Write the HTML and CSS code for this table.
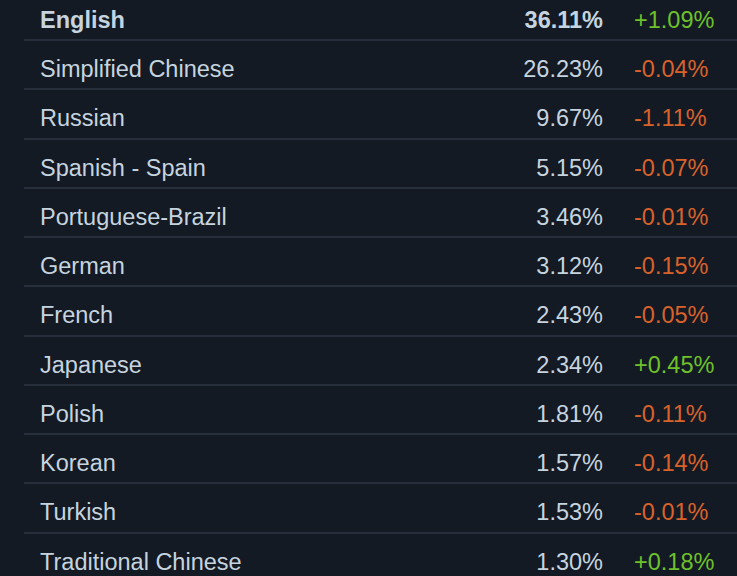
FILE: index.html
```html
<!DOCTYPE html>
<html lang="en">
<head>
  <meta charset="UTF-8">
  <meta name="viewport" content="width=device-width, initial-scale=1.0">
  <title>Languages</title>
  <link rel="stylesheet" href="styles.css">
</head>
<body>

<div class="langs">
  <div class="row top">
    <span class="name">English</span>
    <span class="pct">36.11%</span>
    <span class="chg up">+1.09%</span>
  </div>
  <div class="row">
    <span class="name">Simplified Chinese</span>
    <span class="pct">26.23%</span>
    <span class="chg down">-0.04%</span>
  </div>
  <div class="row">
    <span class="name">Russian</span>
    <span class="pct">9.67%</span>
    <span class="chg down">-1.11%</span>
  </div>
  <div class="row">
    <span class="name">Spanish - Spain</span>
    <span class="pct">5.15%</span>
    <span class="chg down">-0.07%</span>
  </div>
  <div class="row">
    <span class="name">Portuguese-Brazil</span>
    <span class="pct">3.46%</span>
    <span class="chg down">-0.01%</span>
  </div>
  <div class="row">
    <span class="name">German</span>
    <span class="pct">3.12%</span>
    <span class="chg down">-0.15%</span>
  </div>
  <div class="row">
    <span class="name">French</span>
    <span class="pct">2.43%</span>
    <span class="chg down">-0.05%</span>
  </div>
  <div class="row">
    <span class="name">Japanese</span>
    <span class="pct">2.34%</span>
    <span class="chg up">+0.45%</span>
  </div>
  <div class="row">
    <span class="name">Polish</span>
    <span class="pct">1.81%</span>
    <span class="chg down">-0.11%</span>
  </div>
  <div class="row">
    <span class="name">Korean</span>
    <span class="pct">1.57%</span>
    <span class="chg down">-0.14%</span>
  </div>
  <div class="row">
    <span class="name">Turkish</span>
    <span class="pct">1.53%</span>
    <span class="chg down">-0.01%</span>
  </div>
  <div class="row">
    <span class="name">Traditional Chinese</span>
    <span class="pct">1.30%</span>
    <span class="chg up">+0.18%</span>
  </div>
</div>

</body>
</html>
```

FILE: styles.css
```css
html, body {
  height: 100%;
}

body {
  margin: 0;
  overflow: hidden;
  background-color: #131a24;
  color: #c6d4df;
  font-family: 'Liberation Sans', Arial, sans-serif;
  font-size: 23.5px;
}

.langs {
  margin-top: -8.27px;
  padding-left: 24px;
}

.row {
  display: grid;
  grid-template-columns: 1fr auto 103px;
  column-gap: 31px;
  padding: 15px 0 6.27px 16px;
  line-height: 26px;
  border-bottom: 2px solid #262f3b;
}

.row.top {
  font-weight: bold;
}

.pct {
  text-align: right;
}

.chg {
  font-weight: normal;
}

.up {
  color: #6ec12a;
}

.down {
  color: #d9622b;
}
```
